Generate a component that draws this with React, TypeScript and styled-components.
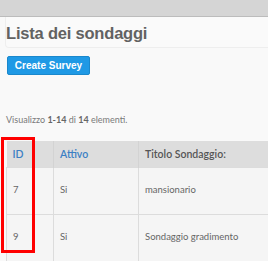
import React from "react";
import styled, { createGlobalStyle } from "styled-components";

const Global = createGlobalStyle`
  html, body { margin: 0; padding: 0; overflow: hidden; }
  body { background: #f9f9f9; font-family: Lato, "Open Sans", sans-serif; width: 268px; height: 261px; }
`;

const Page = styled.div`
  position: relative;
  width: 268px;
  height: 261px;
  overflow: hidden;
`;

const TopBar = styled.div`
  height: 16px;
  background: #d5d5d5;
  border-bottom: 1px solid #bcbcbc;
`;

const Content = styled.div`
  padding: 0 0 0 6px;
`;

const TitlePanel = styled.div`
  margin: 0 -10px 0 -1px;
  height: 30px;
  border: 1px solid #eeeeee;
  border-top: none;
  border-radius: 0 0 4px 4px;
  background: #fafafa;
  display: flex;
  align-items: center;
  padding-left: 0;
`;

const Title = styled.h1`
  margin: 0;
  padding-top: 3px;
  font-family: "Liberation Sans", Arial, sans-serif;
  font-weight: bold;
  font-size: 16.5px;
  letter-spacing: -0.2px;
  color: #626262;
`;

const Button = styled.button`
  margin-top: 8px;
  margin-left: 1px;
  width: 83px;
  height: 19px;
  background: #1f99e5;
  border: 1px solid #1a88cc;
  border-radius: 2px;
  color: #fff;
  font-family: "Liberation Sans", Arial, sans-serif;
  font-weight: bold;
  font-size: 10px;
  padding: 0;
`;

const Summary = styled.p`
  margin: 39px 0 0 0;
  font-size: 9px;
  color: #7a7a7a;
  line-height: 12px;
  b { font-weight: 700; color: #666; }
`;

const Table = styled.table`
  margin-top: 15px;
  width: 420px;
  border-collapse: collapse;
  font-size: 10px;
`;

const Th = styled.th<{ $w?: number; $link?: boolean }>`
  width: ${(p) => (p.$w ? `${p.$w}px` : "auto")};
  height: 26px;
  box-sizing: border-box;
  background: #dddddd;
  text-align: left;
  padding: 0 6px;
  font-weight: 600;
  font-size: 10.5px;
  color: ${(p) => (p.$link ? "#3b7fc4" : "#555")};
  border-left: 1px solid #d3d3d3;
  &:first-child { border-left: none; }
`;

const Td = styled.td`
  height: 47px;
  box-sizing: border-box;
  background: #f5f5f5;
  padding: 0 6px 3px;
  color: #666;
  font-size: 9.5px;
  border: 1px solid #dcdcdc;
`;

const Highlight = styled.div`
  position: absolute;
  left: 1px;
  top: 137px;
  width: 28px;
  height: 110px;
  border: 3px solid #ff0000;
`;

export default function App() {
  const rows = [
    { id: "7", active: "Si", title: "mansionario" },
    { id: "9", active: "Si", title: "Sondaggio gradimento" },
  ];
  return (
    <Page>
      <Global />
      <TopBar />
      <Content>
        <TitlePanel>
          <Title>Lista dei sondaggi</Title>
        </TitlePanel>
        <Button>Create Survey</Button>
        <Summary>
          Visualizzo <b>1-14</b> di <b>14</b> elementi.
        </Summary>
        <Table>
          <thead>
            <tr>
              <Th $w={47} $link>ID</Th>
              <Th $w={85} $link>Attivo</Th>
              <Th>Titolo Sondaggio:</Th>
            </tr>
          </thead>
          <tbody>
            {rows.map((r) => (
              <tr key={r.id}>
                <Td>{r.id}</Td>
                <Td>{r.active}</Td>
                <Td>{r.title}</Td>
              </tr>
            ))}
          </tbody>
        </Table>
      </Content>
      <Highlight />
    </Page>
  );
}
